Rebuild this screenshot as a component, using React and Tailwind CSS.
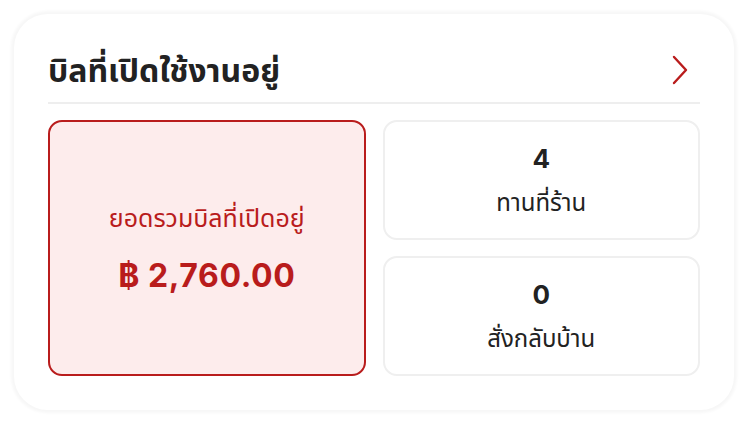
const thai = { fontFamily: '"Noto Sans", "Noto Sans Thai", sans-serif' };
const latin = { fontFamily: 'Inter, "Noto Sans", sans-serif' };

export default function App() {
  return (
    <div className="min-h-[424px] w-[748px] bg-white pt-[14px] pl-[14px]">
      <div className="flex h-[396px] w-[720px] flex-col rounded-[34px] bg-white px-[34px] pt-[24px] pb-[34px] shadow-[0_0_3px_3px_rgba(0,0,0,0.035)]">
        <div className="flex h-[64px] items-center justify-between">
          <h1 className="text-[32px] font-bold leading-none text-[#222]" style={thai}>บิลที่เปิดใช้งานอยู่</h1>
          <svg width="28" height="30" viewBox="0 0 28 30" className="mr-[6px]" fill="none">
            <path d="M8 2 L20 15 L8 28" stroke="#b91c1c" strokeWidth="2.4" strokeLinecap="round" strokeLinejoin="round" />
          </svg>
        </div>
        <div className="h-[2px] bg-[#eeeeee]" />
        <div className="mt-[16px] grid h-[256px] grid-cols-2 gap-x-[17px]">
          <div className="flex flex-col items-center justify-center rounded-[14px] border-2 border-[#b91c1c] bg-[#fdecec] text-[#b91c1c]">
            <p className="text-[25px] leading-none" style={thai}>ยอดรวมบิลที่เปิดอยู่</p>
            <p className="mt-[30px] text-[32px] font-bold leading-none tracking-[0.6px]" style={latin}>฿ 2,760.00</p>
          </div>
          <div className="grid grid-rows-2 gap-y-[16px]">
            <div className="flex flex-col items-center justify-center rounded-[14px] border-2 border-[#efefef] bg-white text-[#222]">
              <p className="text-[26px] font-bold leading-none" style={latin}>4</p>
              <p className="mt-[18px] text-[24px] leading-none" style={thai}>ทานที่ร้าน</p>
            </div>
            <div className="flex flex-col items-center justify-center rounded-[14px] border-2 border-[#efefef] bg-white text-[#222]">
              <p className="text-[26px] font-bold leading-none" style={latin}>0</p>
              <p className="mt-[18px] text-[24px] leading-none" style={thai}>สั่งกลับบ้าน</p>
            </div>
          </div>
        </div>
      </div>
    </div>
  );
}
